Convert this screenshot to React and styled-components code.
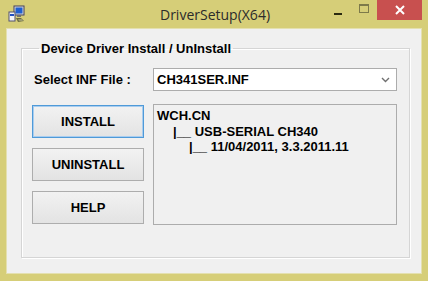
import styled, { createGlobalStyle } from "styled-components";

const GlobalStyle = createGlobalStyle`
  html, body {
    margin: 0;
    padding: 0;
    background: #d6ce78;
  }
`;

const Window = styled.div`
  width: 428px;
  height: 281px;
  display: flex;
  flex-direction: column;
  background: #d6ce78;
  font-family: "Liberation Sans", Arial, sans-serif;
  overflow: hidden;
`;

const TitleBar = styled.div`
  height: 29px;
  display: grid;
  grid-template-columns: 1fr auto 1fr;
  align-items: start;
`;

const AppIcon = styled.div`
  width: 18px;
  height: 18px;
  margin: 5px 0 0 8px;
`;

const Title = styled.div`
  font-family: "Open Sans", "Noto Sans", sans-serif;
  font-size: 14px;
  color: #2b2b2b;
  line-height: 29px;
  padding-left: 2px;
`;

const Controls = styled.div`
  display: flex;
  align-items: flex-start;
  justify-content: flex-end;
  margin-right: 6px;
`;

const CtrlButton = styled.div`
  width: ${(p) => p.$w}px;
  height: 20px;
  display: flex;
  align-items: center;
  justify-content: center;
  background: ${(p) => (p.$close ? "#c8504f" : "transparent")};
`;

const MinGlyph = styled.div`
  width: 8px;
  height: 2px;
  background: #2a2a10;
  margin-top: 7px;
`;

const MaxGlyph = styled.div`
  width: 8px;
  height: 6px;
  border: 1px solid #7d7a4a;
  border-top-width: 2px;
  margin-top: -4px;
`;

const Client = styled.div`
  flex: 1;
  margin: 0 7px 8px 7px;
  background: #f0f0f0;
  box-shadow: 0 0 0 1px #e4e0b0;
  padding: 12px 11px 15px 14px;
  display: flex;
`;

const GroupBox = styled.fieldset`
  flex: 1;
  margin: 0;
  padding: 12px 11px 0 10px;
  border: 1px solid #d5d5d5;
  box-shadow: inset 1px 1px 0 #ffffff, 1px 1px 0 #ffffff;
  min-width: 0;
`;

const Legend = styled.legend`
  font-size: 13px;
  font-weight: bold;
  padding: 0 2px;
  margin-left: 7px;
  line-height: 15px;
  color: #000;
`;

const Grid = styled.div`
  display: grid;
  grid-template-columns: 112px 244px;
  grid-template-rows: 23px 121px;
  column-gap: 9px;
  row-gap: 13px;
`;

const FieldLabel = styled.div`
  display: flex;
  align-items: center;
  padding-left: 2px;
  font-size: 13px;
  font-weight: bold;
  color: #000;
  white-space: nowrap;
`;

const Combo = styled.div`
  display: flex;
  align-items: center;
  justify-content: space-between;
  background: #ffffff;
  border: 1px solid #acacac;
  padding: 0 6px 0 3px;
  font-size: 13px;
  font-weight: bold;
  color: #000;
`;

const ButtonColumn = styled.div`
  display: flex;
  flex-direction: column;
  gap: 10px;
  padding-top: 1px;
`;

const Button = styled.div`
  height: 33px;
  box-sizing: border-box;
  display: flex;
  align-items: center;
  justify-content: center;
  border: 1px solid ${(p) => (p.$default ? "#4f9ad8" : "#adadad")};
  box-shadow: ${(p) => (p.$default ? "inset 0 0 0 1px #a9cdef" : "none")};
  background: linear-gradient(#f2f2f2, #e3e3e3);
  font-size: 13px;
  font-weight: bold;
  color: #000;
`;

const InfoBox = styled.div`
  border: 1px solid #acacac;
  background: #f0f0f0;
  padding: 3px 3px;
  font-size: 13px;
  font-weight: bold;
  color: #000;
`;

const InfoLine = styled.div`
  line-height: 15.5px;
  padding-left: ${(p) => p.$indent}px;
  white-space: pre;
`;

function Icon() {
  return (
    <svg width="18" height="18" viewBox="0 0 18 18">
      <rect x="6" y="1" width="10" height="9" fill="#d8d8d8" stroke="#404060" strokeWidth="1" />
      <rect x="7.5" y="2.5" width="7" height="6" fill="#1f5fd0" />
      <rect x="9" y="10" width="4" height="2" fill="#707070" />
      <rect x="1" y="7" width="6" height="9" fill="#f4f4f4" stroke="#505070" strokeWidth="1" />
      <rect x="2" y="9" width="4" height="2" fill="#2050c0" />
      <path d="M8 13 L13 13 L16 16 L10 17 Z" fill="#6a6a40" />
      <path d="M10 14 L14 14 L15 16 L11 16 Z" fill="#9a9a70" />
    </svg>
  );
}

function Chevron() {
  return (
    <svg width="9" height="6" viewBox="0 0 9 6">
      <path d="M1 1 L4.5 4.5 L8 1" fill="none" stroke="#707070" strokeWidth="1.4" />
    </svg>
  );
}

export default function App() {
  return (
    <>
      <GlobalStyle />
      <Window>
        <TitleBar>
          <AppIcon>
            <Icon />
          </AppIcon>
          <Title>DriverSetup(X64)</Title>
          <Controls>
            <CtrlButton $w={26}>
              <MinGlyph />
            </CtrlButton>
            <CtrlButton $w={26}>
              <MaxGlyph />
            </CtrlButton>
            <CtrlButton $w={45} $close>
              <svg width="10" height="10" viewBox="0 0 10 10">
                <path d="M1 1 L9 9 M9 1 L1 9" stroke="#ffffff" strokeWidth="2" />
              </svg>
            </CtrlButton>
          </Controls>
        </TitleBar>
        <Client>
          <GroupBox>
            <Legend>Device Driver Install / UnInstall</Legend>
            <Grid>
              <FieldLabel>Select INF File :</FieldLabel>
              <Combo>
                <span>CH341SER.INF</span>
                <Chevron />
              </Combo>
              <ButtonColumn>
                <Button $default>INSTALL</Button>
                <Button>UNINSTALL</Button>
                <Button>HELP</Button>
              </ButtonColumn>
              <InfoBox>
                <InfoLine $indent={0}>WCH.CN</InfoLine>
                <InfoLine $indent={16}>|__ USB-SERIAL CH340</InfoLine>
                <InfoLine $indent={32}>|__ 11/04/2011, 3.3.2011.11</InfoLine>
              </InfoBox>
            </Grid>
          </GroupBox>
        </Client>
      </Window>
    </>
  );
}
